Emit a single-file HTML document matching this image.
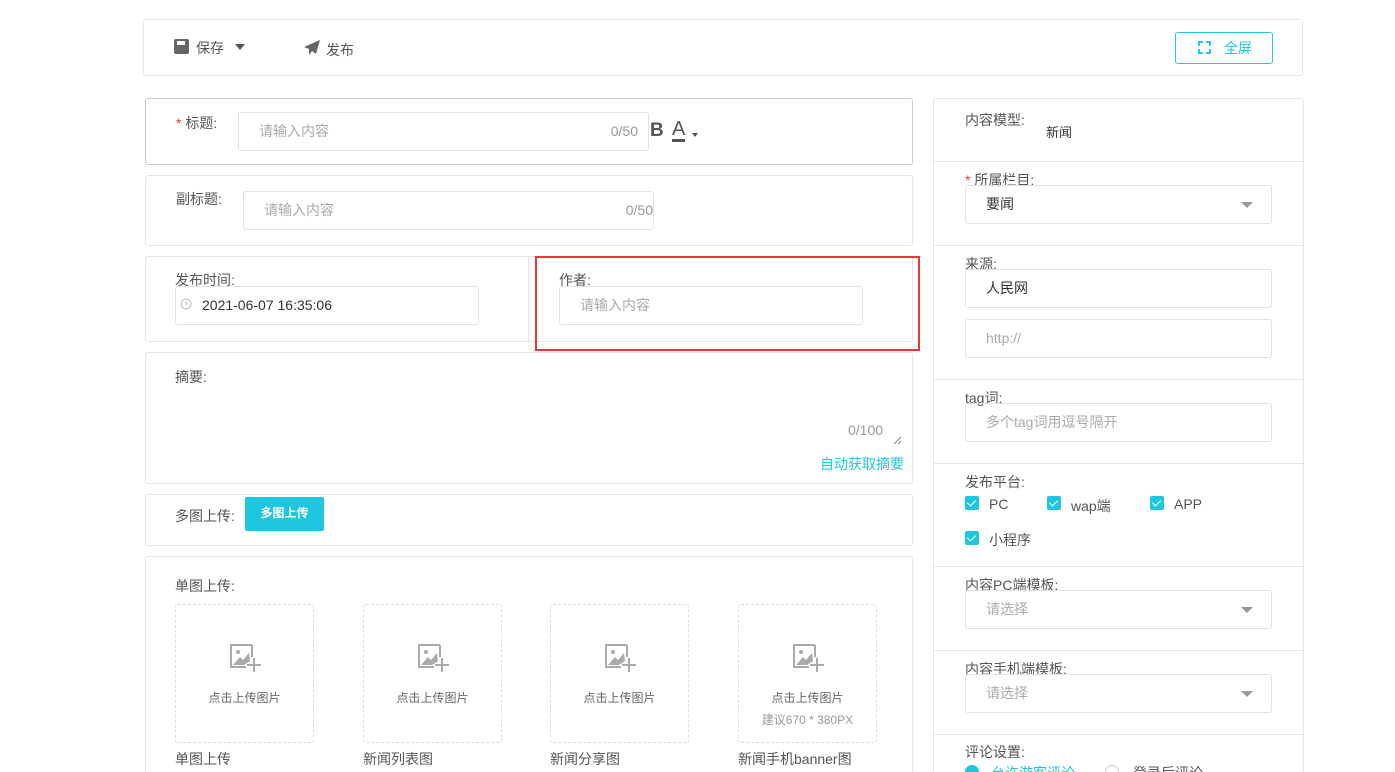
<!DOCTYPE html>
<html><head><meta charset="utf-8"><style>
*{margin:0;padding:0;box-sizing:border-box}
html,body{width:1395px;height:772px;overflow:hidden}
body{background:#fff;font-family:"Liberation Sans","Noto Sans CJK SC",sans-serif;font-size:14px;color:#555;position:relative}
.a{position:absolute}
.p{position:absolute;border:1px solid #e6e6e6;border-radius:3px;background:#fff}
.in{position:absolute;border:1px solid #e2e2e2;border-radius:3px;height:39px;line-height:37px;padding-left:20px;color:#aaa;font-size:14px}
.lb{position:absolute;font-size:14px;color:#555}
.st{color:#f33}
.hr{position:absolute;left:933px;width:370px;height:1px;background:#e6e6e6}
.arr{position:absolute;right:18px;top:16px;border-left:6px solid transparent;border-right:6px solid transparent;border-top:6px solid #999}
.cb{position:absolute;width:14px;height:14px;background:#1fc6e0;border-radius:2px}
.cb:after{content:"";position:absolute;left:4px;top:2px;width:4px;height:7px;border:solid #fff;border-width:0 1.5px 1.5px 0;transform:rotate(45deg)}
.up{position:absolute;top:604px;width:139px;height:139px;border:1px dashed #ddd;border-radius:3px;text-align:center;font-size:12px;color:#666}
.up svg{position:absolute;left:54px;top:38px}
.up .t{position:absolute;top:84px;width:100%}
.cap{position:absolute;top:749px;font-size:14px;color:#555}
</style></head><body>
<div class="p" style="left:143px;top:19px;width:1160px;height:57px"></div>
<svg class="a" style="left:174px;top:39px" width="15" height="15"><rect x="0" y="0" width="15" height="15" rx="2" fill="#666"/><rect x="3" y="2" width="8" height="4" fill="#fff"/></svg>
<div class="lb" style="left:196px;top:38px;color:#555">保存</div>
<div class="a" style="left:235px;top:44px;border-left:5px solid transparent;border-right:5px solid transparent;border-top:6px solid #555"></div>
<svg class="a" style="left:304px;top:40px" width="16" height="15"><path d="M16 0 L0 7 L5 9 L5 15 L8 11 L12 14 Z" fill="#666"/></svg>
<div class="lb" style="left:326px;top:40px">发布</div>
<div class="a" style="left:1175px;top:32px;width:98px;height:32px;border:1px solid #1fc6e0;border-radius:3px;color:#1fc6e0;font-size:14px;line-height:30px"><span style="position:absolute;left:22px;top:8px;width:13px;height:13px;border:2px dashed #1fc6e0"></span><span style="position:absolute;left:48px">全屏</span></div>

<div class="p" style="left:145px;top:98px;width:768px;height:67px;border-color:#ccc"></div>
<div class="lb" style="left:176px;top:113px"><span class="st">* </span>标题:</div>
<div class="in" style="left:238px;top:112px;width:411px">请输入内容<span style="position:absolute;right:10px;color:#999">0/50</span></div>
<div class="a" style="left:650px;top:120px;font-size:19px;font-weight:bold;color:#555">B</div>
<div class="a" style="left:672px;top:120px;font-size:20px;color:#555;border-bottom:3px solid #555;line-height:19px">A</div>
<div class="a" style="left:692px;top:133px;border-left:3px solid transparent;border-right:3px solid transparent;border-top:4px solid #555"></div>

<div class="p" style="left:145px;top:175px;width:768px;height:71px"></div>
<div class="lb" style="left:176px;top:189px">副标题:</div>
<div class="in" style="left:243px;top:191px;width:411px">请输入内容<span style="position:absolute;right:0;color:#999">0/50</span></div>

<div class="p" style="left:145px;top:256px;width:768px;height:86px"></div>
<div class="a" style="left:528px;top:257px;width:1px;height:84px;background:#e6e6e6"></div>
<div class="lb" style="left:175px;top:270px">发布时间:</div>
<div class="in" style="left:175px;top:286px;width:304px;padding-left:26px;color:#333">2021-06-07 16:35:06<svg class="a" style="left:4px;top:11px" width="12" height="12"><circle cx="6" cy="6" r="5" fill="none" stroke="#bbb"/><path d="M6 3 V6 H8.5" fill="none" stroke="#bbb"/></svg></div>
<div class="lb" style="left:559px;top:270px">作者:</div>
<div class="in" style="left:559px;top:286px;width:304px">请输入内容</div>
<div class="a" style="left:535px;top:256px;width:385px;height:95px;border:2px solid #e53935"></div>

<div class="p" style="left:145px;top:352px;width:768px;height:132px"></div>
<div class="lb" style="left:175px;top:367px">摘要:</div>
<div class="a" style="left:848px;top:422px;color:#999;font-size:14px">0/100</div>
<svg class="a" style="left:893px;top:436px" width="9" height="9"><path d="M8 1 L1 8 M8 5 L5 8" stroke="#888"/></svg>
<div class="a" style="left:820px;top:454px;color:#1fc6e0;font-size:14px">自动获取摘要</div>

<div class="p" style="left:145px;top:494px;width:768px;height:52px"></div>
<div class="lb" style="left:175px;top:506px">多图上传:</div>
<div class="a" style="left:245px;top:497px;width:79px;height:34px;background:#1fc6e0;border-radius:2px;color:#fff;font-size:12px;line-height:32px;text-align:center;font-weight:bold">多图上传</div>

<div class="p" style="left:145px;top:556px;width:768px;height:230px"></div>
<div class="lb" style="left:175px;top:576px">单图上传:</div>
<div class="up" style="left:175px"><svg width="32" height="30"><path d="M22 2 H1 V24 H16" fill="none" stroke="#aaa" stroke-width="2"/><path d="M22 2 V14" stroke="#aaa" stroke-width="2"/><circle cx="8" cy="9" r="2" fill="#aaa"/><path d="M3 22 L10 14 L13 17 L19 10 L20 18 L14 22 Z" fill="#aaa"/><path d="M24 15 V29 M17 22 H31" stroke="#aaa" stroke-width="2"/></svg><div class="t">点击上传图片</div></div>
<div class="up" style="left:363px"><svg width="32" height="30"><path d="M22 2 H1 V24 H16" fill="none" stroke="#aaa" stroke-width="2"/><path d="M22 2 V14" stroke="#aaa" stroke-width="2"/><circle cx="8" cy="9" r="2" fill="#aaa"/><path d="M3 22 L10 14 L13 17 L19 10 L20 18 L14 22 Z" fill="#aaa"/><path d="M24 15 V29 M17 22 H31" stroke="#aaa" stroke-width="2"/></svg><div class="t">点击上传图片</div></div>
<div class="up" style="left:550px"><svg width="32" height="30"><path d="M22 2 H1 V24 H16" fill="none" stroke="#aaa" stroke-width="2"/><path d="M22 2 V14" stroke="#aaa" stroke-width="2"/><circle cx="8" cy="9" r="2" fill="#aaa"/><path d="M3 22 L10 14 L13 17 L19 10 L20 18 L14 22 Z" fill="#aaa"/><path d="M24 15 V29 M17 22 H31" stroke="#aaa" stroke-width="2"/></svg><div class="t">点击上传图片</div></div>
<div class="up" style="left:738px"><svg width="32" height="30"><path d="M22 2 H1 V24 H16" fill="none" stroke="#aaa" stroke-width="2"/><path d="M22 2 V14" stroke="#aaa" stroke-width="2"/><circle cx="8" cy="9" r="2" fill="#aaa"/><path d="M3 22 L10 14 L13 17 L19 10 L20 18 L14 22 Z" fill="#aaa"/><path d="M24 15 V29 M17 22 H31" stroke="#aaa" stroke-width="2"/></svg><div class="t">点击上传图片</div><div class="t" style="top:106px;color:#999">建议670 * 380PX</div></div>
<div class="cap" style="left:175px">单图上传</div>
<div class="cap" style="left:363px">新闻列表图</div>
<div class="cap" style="left:550px">新闻分享图</div>
<div class="cap" style="left:738px">新闻手机banner图</div>

<div class="p" style="left:933px;top:98px;width:371px;height:700px"></div>
<div class="hr" style="top:161px"></div><div class="hr" style="top:245px"></div><div class="hr" style="top:379px"></div><div class="hr" style="top:463px"></div><div class="hr" style="top:566px"></div><div class="hr" style="top:650px"></div><div class="hr" style="top:734px"></div>
<div class="lb" style="left:965px;top:110px">内容模型:</div>
<div class="a" style="left:1046px;top:122px;font-size:13px;color:#333">新闻</div>
<div class="lb" style="left:965px;top:170px"><span class="st">* </span>所属栏目:</div>
<div class="in" style="left:965px;top:185px;width:307px;color:#333">要闻<span class="arr"></span></div>
<div class="lb" style="left:965px;top:254px">来源:</div>
<div class="in" style="left:965px;top:269px;width:307px;color:#333">人民网</div>
<div class="in" style="left:965px;top:319px;width:307px">http://</div>
<div class="lb" style="left:965px;top:388px">tag词:</div>
<div class="in" style="left:965px;top:403px;width:307px">多个tag词用逗号隔开</div>
<div class="lb" style="left:965px;top:472px">发布平台:</div>
<div class="cb" style="left:965px;top:496px"></div><div class="lb" style="left:989px;top:496px">PC</div>
<div class="cb" style="left:1047px;top:496px"></div><div class="lb" style="left:1071px;top:496px">wap端</div>
<div class="cb" style="left:1150px;top:496px"></div><div class="lb" style="left:1174px;top:496px">APP</div>
<div class="cb" style="left:965px;top:531px"></div><div class="lb" style="left:989px;top:530px">小程序</div>
<div class="lb" style="left:965px;top:575px">内容PC端模板:</div>
<div class="in" style="left:965px;top:590px;width:307px">请选择<span class="arr"></span></div>
<div class="lb" style="left:965px;top:659px">内容手机端模板:</div>
<div class="in" style="left:965px;top:674px;width:307px">请选择<span class="arr"></span></div>
<div class="lb" style="left:965px;top:742px">评论设置:</div>
<div class="a" style="left:965px;top:765px;width:14px;height:14px;border-radius:50%;background:#1fc6e0"></div>
<div class="a" style="left:991px;top:763px;color:#1fc6e0">允许游客评论</div>
<div class="a" style="left:1105px;top:765px;width:14px;height:14px;border-radius:50%;border:1px solid #ccc"></div>
<div class="a" style="left:1133px;top:763px;color:#555">登录后评论</div>
</body></html>
